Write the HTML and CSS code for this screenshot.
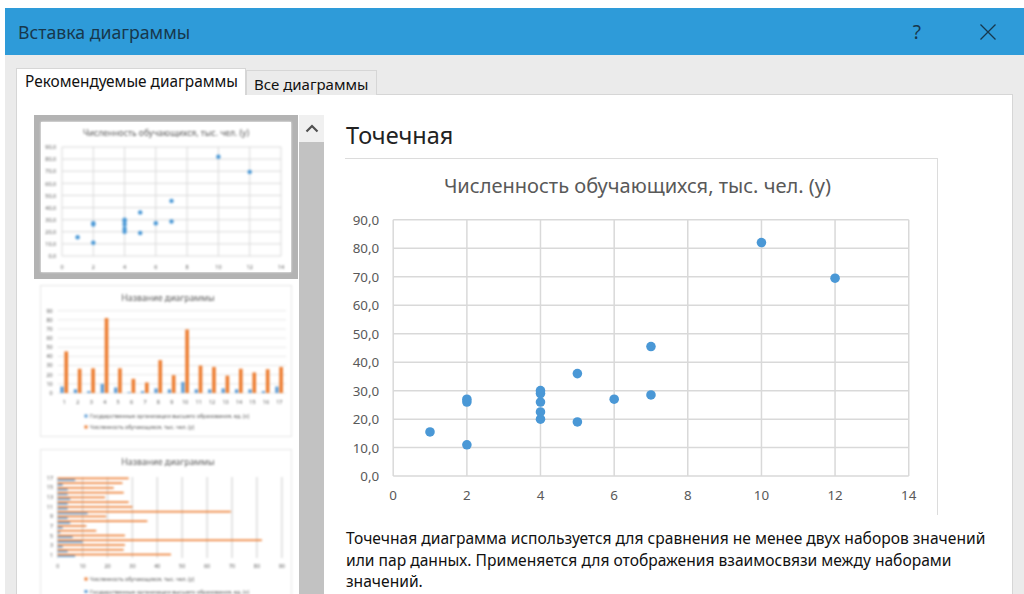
FILE: index.html
```html
<!DOCTYPE html>
<html lang="ru">
<head>
<meta charset="utf-8">
<title>Вставка диаграммы</title>
<link rel="stylesheet" href="styles.css">
</head>
<body>
<div class="window">
  <header class="titlebar">
    <span class="title">Вставка диаграммы</span>
    <span class="help">?</span>
    <svg class="close" width="18" height="18" viewBox="0 0 18 18"><path d="M1.5 1.5 L16.5 16.5 M16.5 1.5 L1.5 16.5"/></svg>
  </header>
  <nav class="tabs">
    <div class="tab tab-active">Рекомендуемые диаграммы</div>
    <div class="tab">Все диаграммы</div>
  </nav>
  <main class="panel">
    <section class="gallery">
      <div class="thumbs">
        <div class="thumb thumb-selected">
          <svg class="mini" width="250" height="150" viewBox="0 0 250 150">
            <text class="mini-title" x="125" y="13.5">Численность обучающихся, тыс. чел. (y)</text>
            <path class="mini-grid" d="M21 25H240M21 37.1H240M21 49.2H240M21 61.3H240M21 73.4H240M21 85.6H240M21 97.7H240M21 109.8H240M21 121.9H240M21 134H240M21 25V134M52.3 25V134M83.6 25V134M114.8 25V134M146.1 25V134M177.4 25V134M208.7 25V134M240 25V134"/>
            <g class="mini-y">
              <text x="15" y="27">90,0</text><text x="15" y="39">80,0</text><text x="15" y="51">70,0</text><text x="15" y="63.5">60,0</text><text x="15" y="75.5">50,0</text><text x="15" y="87.5">40,0</text><text x="15" y="100">30,0</text><text x="15" y="112">20,0</text><text x="15" y="124">10,0</text><text x="15" y="136">0,0</text>
            </g>
            <g class="mini-x">
              <text x="21" y="147">0</text><text x="52.3" y="147">2</text><text x="83.6" y="147">4</text><text x="114.8" y="147">6</text><text x="146.1" y="147">8</text><text x="177.4" y="147">10</text><text x="208.7" y="147">12</text><text x="240" y="147">14</text>
            </g>
            <g class="dots">
              <circle cx="36.6" cy="115.2" r="2.2"/><circle cx="52.3" cy="120.7" r="2.2"/><circle cx="52.3" cy="102.5" r="2.2"/><circle cx="52.3" cy="101.3" r="2.2"/><circle cx="83.6" cy="109.8" r="2.2"/><circle cx="83.6" cy="106.8" r="2.2"/><circle cx="83.6" cy="102.5" r="2.2"/><circle cx="83.6" cy="98.9" r="2.2"/><circle cx="83.6" cy="97.7" r="2.2"/><circle cx="99.2" cy="90.4" r="2.2"/><circle cx="99.2" cy="111" r="2.2"/><circle cx="114.8" cy="101.3" r="2.2"/><circle cx="130.5" cy="99.5" r="2.2"/><circle cx="130.5" cy="78.9" r="2.2"/><circle cx="177.4" cy="34.8" r="2.2"/><circle cx="208.7" cy="49.9" r="2.2"/>
            </g>
          </svg>
        </div>
        <div class="thumb">
          <svg class="mini mini-outlined" width="250" height="150" viewBox="0 0 250 150">
            <text class="mini-heading" x="127" y="15">Название диаграммы</text>
            <path class="mini-grid-thin" d="M16.7 24.7H245M16.7 33.8H245M16.7 43H245M16.7 52.1H245M16.7 61.3H245M16.7 70.4H245M16.7 79.5H245M16.7 88.7H245M16.7 97.9H245M16.7 107H245"/>
            <g class="mini-y">
              <text x="11.7" y="26.5">90</text><text x="11.7" y="35.6">80</text><text x="11.7" y="44.8">70</text><text x="11.7" y="53.9">60</text><text x="11.7" y="63.1">50</text><text x="11.7" y="72.2">40</text><text x="11.7" y="81.3">30</text><text x="11.7" y="90.5">20</text><text x="11.7" y="99.7">10</text><text x="11.7" y="108.8">0</text>
            </g>
            <!-- one unit across is a category, one unit up is a value -->
            <g transform="translate(16.7 107) scale(13.43 -0.914)">
              <g class="bar-blue">
                <rect x="0.2" width="0.24" height="7"/><rect x="1.2" width="0.24" height="4"/><rect x="2.2" width="0.24" height="2"/><rect x="3.2" width="0.24" height="10"/><rect x="4.2" width="0.24" height="6"/><rect x="5.2" width="0.24" height="1"/><rect x="6.2" width="0.24" height="2"/><rect x="7.2" width="0.24" height="5"/><rect x="8.2" width="0.24" height="4"/><rect x="9.2" width="0.24" height="12"/><rect x="10.2" width="0.24" height="4"/><rect x="11.2" width="0.24" height="4"/><rect x="12.2" width="0.24" height="5"/><rect x="13.2" width="0.24" height="4"/><rect x="14.2" width="0.24" height="4"/><rect x="15.2" width="0.24" height="2"/><rect x="16.2" width="0.24" height="7"/>
              </g>
              <g class="bar-orange">
                <rect x="0.5" width="0.27" height="45.5"/><rect x="1.5" width="0.27" height="26.5"/><rect x="2.5" width="0.27" height="27"/><rect x="3.5" width="0.27" height="82"/><rect x="4.5" width="0.27" height="27"/><rect x="5.5" width="0.27" height="15.5"/><rect x="6.5" width="0.27" height="11.5"/><rect x="7.5" width="0.27" height="36"/><rect x="8.5" width="0.27" height="19.5"/><rect x="9.5" width="0.27" height="69.5"/><rect x="10.5" width="0.27" height="30"/><rect x="11.5" width="0.27" height="28.5"/><rect x="12.5" width="0.27" height="19"/><rect x="13.5" width="0.27" height="26.5"/><rect x="14.5" width="0.27" height="22.5"/><rect x="15.5" width="0.27" height="26"/><rect x="16.5" width="0.27" height="28.5"/>
              </g>
            </g>
            <g class="mini-x">
              <text x="23.4" y="118">1</text><text x="36.8" y="118">2</text><text x="50.3" y="118">3</text><text x="63.7" y="118">4</text><text x="77.1" y="118">5</text><text x="90.6" y="118">6</text><text x="104" y="118">7</text><text x="117.4" y="118">8</text><text x="130.8" y="118">9</text><text x="144.3" y="118">10</text><text x="157.7" y="118">11</text><text x="171.1" y="118">12</text><text x="184.6" y="118">13</text><text x="198" y="118">14</text><text x="211.4" y="118">15</text><text x="224.9" y="118">16</text><text x="238.3" y="118">17</text>
            </g>
            <rect class="swatch-blue" x="43.5" y="128.5" width="3" height="3"/>
            <text class="mini-legend" x="49" y="132">Государственные организации высшего образования, ед. (x)</text>
            <rect class="swatch-orange" x="43.5" y="139.5" width="3" height="3"/>
            <text class="mini-legend" x="49" y="143">Численность обучающихся, тыс. чел. (y)</text>
          </svg>
        </div>
        <div class="thumb">
          <svg class="mini mini-outlined" width="250" height="150" viewBox="0 0 250 150">
            <text class="mini-heading" x="127" y="15">Название диаграммы</text>
            <path class="mini-grid-wide" d="M16.7 27V108M41.6 27V108M66.5 27V108M91.4 27V108M116.3 27V108M141.2 27V108M166.1 27V108M191 27V108M215.9 27V108M240.8 27V108"/>
            <!-- one unit across is a value, one unit up is a category -->
            <g transform="translate(16.7 107.7) scale(2.49 -4.76)">
              <g class="bar-blue">
                <rect y="0.14" height="0.34" width="7"/><rect y="1.14" height="0.34" width="4"/><rect y="2.14" height="0.34" width="2"/><rect y="3.14" height="0.34" width="10"/><rect y="4.14" height="0.34" width="6"/><rect y="5.14" height="0.34" width="1"/><rect y="6.14" height="0.34" width="2"/><rect y="7.14" height="0.34" width="5"/><rect y="8.14" height="0.34" width="4"/><rect y="9.14" height="0.34" width="12"/><rect y="10.14" height="0.34" width="4"/><rect y="11.14" height="0.34" width="4"/><rect y="12.14" height="0.34" width="5"/><rect y="13.14" height="0.34" width="4"/><rect y="14.14" height="0.34" width="4"/><rect y="15.14" height="0.34" width="2"/><rect y="16.14" height="0.34" width="7"/>
              </g>
              <g class="bar-orange">
                <rect y="0.5" height="0.34" width="45.5"/><rect y="1.5" height="0.34" width="26.5"/><rect y="2.5" height="0.34" width="27"/><rect y="3.5" height="0.34" width="82"/><rect y="4.5" height="0.34" width="27"/><rect y="5.5" height="0.34" width="15.5"/><rect y="6.5" height="0.34" width="11.5"/><rect y="7.5" height="0.34" width="36"/><rect y="8.5" height="0.34" width="19.5"/><rect y="9.5" height="0.34" width="69.5"/><rect y="10.5" height="0.34" width="30"/><rect y="11.5" height="0.34" width="28.5"/><rect y="12.5" height="0.34" width="19"/><rect y="13.5" height="0.34" width="26.5"/><rect y="14.5" height="0.34" width="22.5"/><rect y="15.5" height="0.34" width="26"/><rect y="16.5" height="0.34" width="28.5"/>
              </g>
            </g>
            <g class="mini-y">
              <text x="12" y="107">1</text><text x="12" y="97.3">3</text><text x="12" y="87.6">5</text><text x="12" y="77.9">7</text><text x="12" y="68.2">9</text><text x="12" y="58.5">11</text><text x="12" y="48.9">13</text><text x="12" y="39.2">15</text><text x="12" y="29.5">17</text>
            </g>
            <g class="mini-x">
              <text x="16.7" y="118">0</text><text x="41.6" y="118">10</text><text x="66.5" y="118">20</text><text x="91.4" y="118">30</text><text x="116.3" y="118">40</text><text x="141.2" y="118">50</text><text x="166.1" y="118">60</text><text x="191" y="118">70</text><text x="215.9" y="118">80</text><text x="240.8" y="118">90</text>
            </g>
            <rect class="swatch-orange" x="43.5" y="127.5" width="3" height="3"/>
            <text class="mini-legend" x="49" y="131">Численность обучающихся, тыс. чел. (y)</text>
            <rect class="swatch-blue" x="43.5" y="140" width="3" height="3"/>
            <text class="mini-legend" x="49" y="143.5">Государственные организации высшего образования, ед. (x)</text>
          </svg>
        </div>
      </div>
      <div class="scrollbar">
        <div class="scroll-up">
          <svg width="14" height="9" viewBox="0 0 14 9"><path d="M1.5 7.5 L7 2 L12.5 7.5"/></svg>
        </div>
        <div class="scroll-thumb"></div>
      </div>
    </section>
    <section class="detail">
      <h2 class="chart-name">Точечная</h2>
      <svg class="chart" width="593" height="357" viewBox="0 0 593 357">
        <text class="chart-title" x="293" y="34">Численность обучающихся, тыс. чел. (y)</text>
        <path class="chart-grid" d="M48 61H565M48 89.6H565M48 118.1H565M48 146.7H565M48 175.2H565M48 203.8H565M48 232.3H565M48 260.9H565M48 289.4H565M48 318H565M48 61V318M121.9 61V318M195.7 61V318M269.6 61V318M343.4 61V318M417.3 61V318M491.1 61V318M565 61V318"/>
        <g class="axis-y">
          <text x="34" y="66">90,0</text><text x="34" y="94.6">80,0</text><text x="34" y="123.1">70,0</text><text x="34" y="151.7">60,0</text><text x="34" y="180.2">50,0</text><text x="34" y="208.8">40,0</text><text x="34" y="237.3">30,0</text><text x="34" y="265.9">20,0</text><text x="34" y="294.4">10,0</text><text x="34" y="323">0,0</text>
        </g>
        <g class="axis-x">
          <text x="48" y="342">0</text><text x="121.9" y="342">2</text><text x="195.7" y="342">4</text><text x="269.6" y="342">6</text><text x="343.4" y="342">8</text><text x="417.3" y="342">10</text><text x="491.1" y="342">12</text><text x="565" y="342">14</text>
        </g>
        <g class="dots">
          <circle cx="84.9" cy="273.7" r="4.8"/><circle cx="121.9" cy="286.6" r="4.8"/><circle cx="121.9" cy="243.7" r="4.8"/><circle cx="121.9" cy="240.9" r="4.8"/><circle cx="195.7" cy="260.9" r="4.8"/><circle cx="195.7" cy="253.7" r="4.8"/><circle cx="195.7" cy="243.7" r="4.8"/><circle cx="195.7" cy="235.2" r="4.8"/><circle cx="195.7" cy="232.3" r="4.8"/><circle cx="232.7" cy="215.2" r="4.8"/><circle cx="232.7" cy="263.7" r="4.8"/><circle cx="269.6" cy="240.9" r="4.8"/><circle cx="306.5" cy="236.6" r="4.8"/><circle cx="306.5" cy="188.1" r="4.8"/><circle cx="417.3" cy="83.8" r="4.8"/><circle cx="491.1" cy="119.5" r="4.8"/>
        </g>
      </svg>
      <p class="description">Точечная диаграмма используется для сравнения не менее двух наборов значений или пар данных. Применяется для отображения взаимосвязи между наборами значений.</p>
    </section>
  </main>
</div>
</body>
</html>
```
FILE: styles.css
```css
* { box-sizing: border-box; }

html, body {
  margin: 0;
  height: 594px;
  overflow: hidden;
  background: #fff;
}

body {
  padding: 8px 0 0 5px;
  font-family: "Noto Sans", "Open Sans", sans-serif;
  color: #111;
}

.window {
  height: 586px;
  display: flex;
  flex-direction: column;
  background: #ebebeb;
  overflow: hidden;
}

/* Title bar */
.titlebar {
  flex: none;
  height: 47px;
  display: flex;
  align-items: center;
  padding-left: 13px;
  background: #2e9bd9;
  color: #17384d;
}

.title { font-size: 17.7px; flex: 1; }
.help { font-size: 19px; margin-right: 58px; }
.close { margin-right: 27px; }
.close path { fill: none; stroke: #17384d; stroke-width: 1.3; }

/* Tabs */
.tabs {
  flex: none;
  height: 39px;
  padding: 12px 0 0 11px;
  display: flex;
  align-items: flex-end;
  position: relative;
  z-index: 1;
}

.tab {
  height: 25px;
  width: 131px;
  padding-left: 7px;
  font-size: 15px;
  line-height: 26px;
  white-space: nowrap;
  background: #ebebeb;
  border: 1px solid #d6d6d6;
  border-bottom: 0;
  margin-bottom: -1px;
}

.tab-active {
  height: 27px;
  width: 230px;
  padding-left: 8px;
  font-size: 15.4px;
  line-height: 25px;
  background: #fff;
}

/* Panel under the tabs */
.panel {
  flex: 1;
  min-height: 0;
  width: 997px;
  margin-left: 11px;
  display: flex;
  gap: 21px;
  padding: 20px 0 0 17px;
  background: #fff;
  border: 1px solid #d6d6d6;
  border-bottom: 0;
}

/* Chart gallery */
.gallery { flex: none; display: flex; gap: 1px; }

.thumbs { width: 264px; display: flex; flex-direction: column; }

.thumb {
  flex: none;
  height: 164px;
  border: 7px solid transparent;
}

.thumb-selected { border-color: #b3b3b3; }

.mini { display: block; background: #fff; filter: blur(0.8px); }
.mini-outlined { outline: 1px solid #e6e6e6; }

.mini-title { font-size: 8.6px; fill: #595959; text-anchor: middle; }
.mini-heading { font-size: 8.8px; fill: #595959; text-anchor: middle; }
.mini-y text { font-size: 5.4px; fill: #595959; text-anchor: end; }
.mini-x text { font-size: 5.4px; fill: #595959; text-anchor: middle; }
.mini-legend { font-size: 5.4px; fill: #595959; }
.mini-grid { fill: none; stroke: #d9d9d9; stroke-width: 1; }
.mini-grid-thin { fill: none; stroke: #e2e2e2; stroke-width: 0.8; }
.mini-grid-wide { fill: none; stroke: #d9d9d9; stroke-width: 1.4; }
.bar-blue, .swatch-blue { fill: #5b9bd5; }
.bar-orange, .swatch-orange { fill: #ed7d31; }
.dots { fill: #4a98d6; }

/* Gallery scrollbar */
.scrollbar {
  width: 25px;
  display: flex;
  flex-direction: column;
  background: #c2c2c2;
}

.scroll-up {
  flex: none;
  height: 27px;
  display: flex;
  align-items: center;
  justify-content: center;
  background: #f0f0f0;
}

.scroll-up path { fill: none; stroke: #505050; stroke-width: 2.2; }
.scroll-thumb { flex: 1; }

/* Selected chart */
.detail { width: 645px; min-width: 0; }

.chart-name {
  margin: 0;
  height: 43px;
  padding-left: 1px;
  font-size: 23.5px;
  font-weight: 400;
  line-height: 40px;
  color: #222;
}

.chart {
  display: block;
  border-top: 1px solid #dcdcdc;
  border-right: 1px solid #dcdcdc;
}

.chart-title { font-size: 20.1px; fill: #595959; text-anchor: middle; }
.chart-grid { fill: none; stroke: #d9d9d9; stroke-width: 1.5; }
.axis-y text { font-size: 13.4px; fill: #595959; text-anchor: end; }
.axis-x text { font-size: 13.4px; fill: #595959; text-anchor: middle; }

.description {
  margin: 13px 0 0;
  padding-left: 1px;
  font-size: 15.6px;
  line-height: 21.5px;
  color: #111;
}
```
